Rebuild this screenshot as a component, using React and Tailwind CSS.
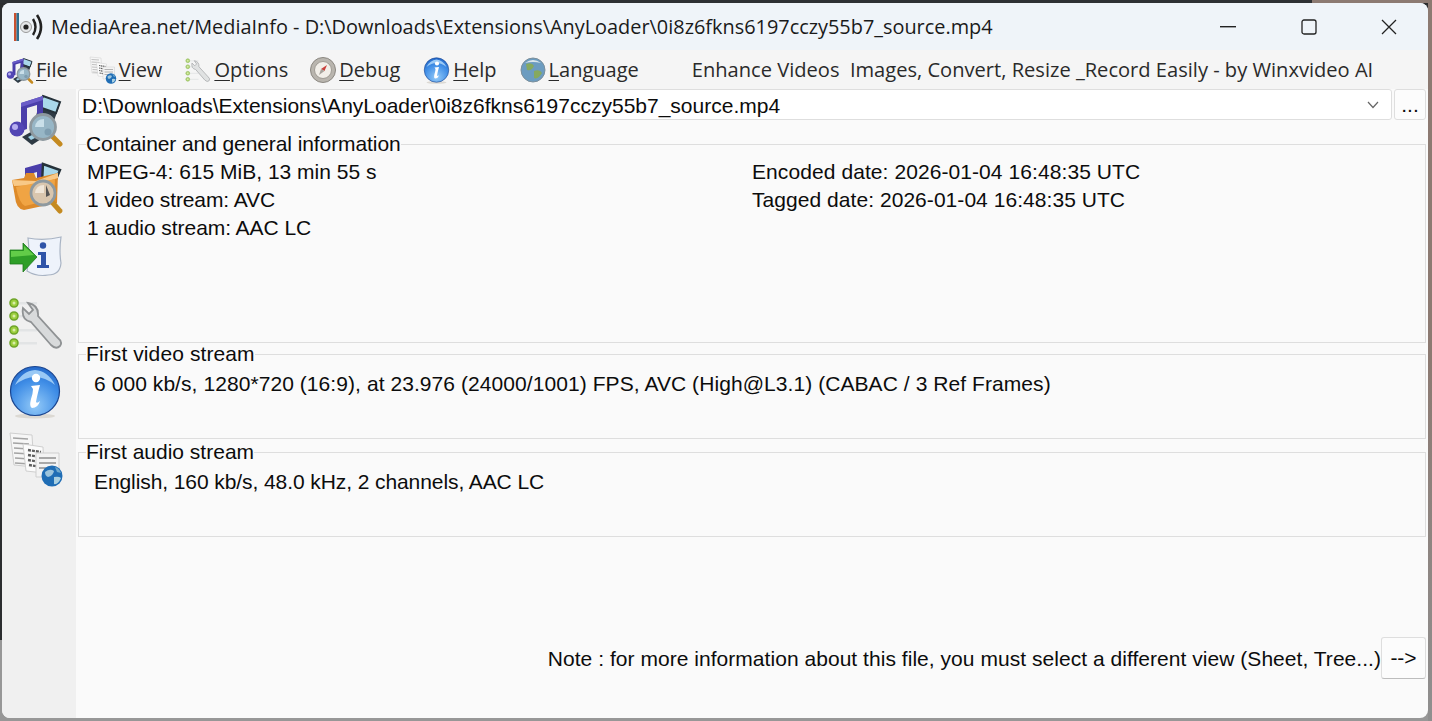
import React from 'react';

const BODY = { fontFamily: '"Liberation Sans", Arial, sans-serif' };

const AudioIcon = ({ size = 56 }) => (
  <svg width={size} height={size} viewBox="0 0 56 56">
    <path d="M32 8 L52 13 L43 38 L27 30 Z" fill="#2e3a44" />
    <path d="M35 5 L52 11 L48 22 L31 16 Z" fill="#a9d8ea" stroke="#26323a" strokeWidth="2" />
    <path d="M13 12 L35 5 L35 28 L29 30 L29 14 L19 17 L19 38 L13 40 Z" fill="#4a3eaa" />
    <path d="M13 12 L35 5 L35 9 L13 16 Z" fill="#6a5cc8" />
    <circle cx="9" cy="38" r="7.5" fill="#5246b4" />
    <circle cx="7" cy="36" r="3" fill="#b6aef0" />
    <path d="M14 46 L28 38 L36 46 L24 54 Z" fill="#2e3a44" />
    <path d="M20 46 L26 43 L29 46 L23 49 Z" fill="#9fd0e4" />
    <path d="M44 45 L52 53" stroke="#c48a20" strokeWidth="5" strokeLinecap="round" />
    <circle cx="35" cy="36" r="12.5" fill="#97b6c6" stroke="#8e999f" strokeWidth="2.8" />
    <path d="M27 36 Q28 28 36 28 L36 36 Z" fill="#c9dfe9" />
    <circle cx="40" cy="41" r="3.5" fill="#7e9db0" />
  </svg>
);

const FolderIcon = () => (
  <svg width="56" height="56" viewBox="0 0 56 56">
    <path d="M17 9 L35 4 L35 24 L29 24 L29 13 L22 15 L22 24 L17 24 Z" fill="#4a3eaa" />
    <path d="M35 5 L52 11 L44 30 L34 24 Z" fill="#a9d8ea" stroke="#26323a" strokeWidth="2.4" />
    <path d="M4 21 L16 19 L18 14 L26 14 L28 19 L50 14 L49 44 L16 51 Q8 50 7 38 Z" fill="#dd8a2a" />
    <path d="M4 21 L28 22 L50 14 L50 19 L28 26 L6 27 Z" fill="#f8c988" />
    <path d="M8 28 L47 20 L46 40 L17 47 Q11 44 8 28 Z" fill="#f0a444" />
    <path d="M44 43 L52 52" stroke="#c48a20" strokeWidth="5" strokeLinecap="round" />
    <circle cx="35" cy="34" r="12" fill="#d9c6ae" stroke="#8e999f" strokeWidth="2.8" />
    <path d="M27 34 Q28 26 36 26 L36 34 Z" fill="#f0e6d8" />
    <path d="M38 26 L42 36 L38 38 Z" fill="#555" />
  </svg>
);

const TextIcon = () => (
  <svg width="56" height="56" viewBox="0 0 56 56">
    <path d="M20 11 Q36 14 53 10 Q51 24 53 36 Q52 48 40 48 Q29 50 19 44 Q22 28 20 11 Z" fill="#eef3fb" stroke="#a9b4c4" strokeWidth="1.2" />
    <circle cx="35" cy="18.5" r="3.2" fill="#2f54a8" />
    <path d="M30 25 L38 25 L38 38 L41 38 L41 41 L29 41 L29 38 L33 38 L33 28 L30 28 Z" fill="#2f54a8" />
    <path d="M2 23 L15 23 L15 16 L29 30 L15 45 L15 37 L2 37 Z" fill="#2f9f28" stroke="#1d7a1b" strokeWidth="0.8" />
    <path d="M3 24 L16 24 L16 19 L26 28 L3 30 Z" fill="#62cc48" />
  </svg>
);

const OptionsIcon = ({ size = 56 }) => (
  <svg width={size} height={size} viewBox="0 0 56 56">
    {[8, 21, 35, 48].map((y) => (
      <g key={y}>
        <rect x="11" y={y - 1} width="18" height="2.5" fill="#e2e4e5" />
        <circle cx="6" cy={y} r="4" fill="#9ccf3e" stroke="#6fa52a" strokeWidth="1.6" />
        <circle cx="6" cy={y} r="1.5" fill="#d9eda8" />
      </g>
    ))}
    <path d="M15 13 Q13 25 23 27 L43 50 Q48 55 52 51 Q55 47 50 43 L30 21 Q31 10 20 8 L25 15 L21 19 Z" fill="#d8dadb" stroke="#8f9294" strokeWidth="1.8" />
  </svg>
);

const InfoIcon = ({ size = 56 }) => (
  <svg width={size} height={size} viewBox="0 0 56 56">
    <defs>
      <radialGradient id="infoBlue" cx="0.5" cy="0.8" r="0.85">
        <stop offset="0" stopColor="#93caf8" />
        <stop offset="0.6" stopColor="#3f8de6" />
        <stop offset="1" stopColor="#1f62c4" />
      </radialGradient>
    </defs>
    <ellipse cx="27" cy="53" rx="20" ry="2.5" fill="#dcd9d3" />
    <circle cx="27" cy="28" r="24.5" fill="url(#infoBlue)" stroke="#1a4590" strokeWidth="1.2" />
    <path d="M7 22 Q27 6 47 22 Q40 8 27 7 Q14 8 7 22 Z" fill="#9ac9f5" />
    <circle cx="28" cy="15" r="4.2" fill="#fff" />
    <path d="M23 23 L32 22 Q29 33 28 39 Q29 41 32 38 Q30 45 24 45 Q21 44 23 36 Q25 30 25 26 Z" fill="#fff" />
  </svg>
);

const SheetIcon = ({ size = 56 }) => (
  <svg width={size} height={size} viewBox="0 0 56 56">
    <path d="M2 2 L24 4 L26 36 L6 34 Z" fill="#f6f6f6" stroke="#cfcfcf" />
    <path d="M5 7 L20 8 M5 12 L21 13 M6 17 L21 18 M6 22 L22 23 M7 27 L22 28 M7 32 L22 33" stroke="#a3a3a3" strokeWidth="1.3" />
    <path d="M15 13 L35 16 L36 42 L18 40 Z" fill="#fbfbfb" stroke="#cfcfcf" />
    <path d="M20 19 L33 21 M20 24 L33 26 M20 29 L33 31 M21 34 L33 36" stroke="#5f5f5f" strokeWidth="2.4" strokeDasharray="3 1" />
    <path d="M28 22 L51 22 L51 46 L28 46 Z" fill="#f3f3f3" stroke="#cfcfcf" />
    <path d="M31 27 L48 27 M31 32 L48 32 M31 37 L40 37" stroke="#909090" strokeWidth="1.3" />
    <circle cx="44" cy="45" r="10.5" fill="#1f6db5" />
    <path d="M37 41 Q42 37 46 40 Q45 45 40 46 Q37 45 37 41 Z" fill="#9cc4dc" />
    <path d="M46 46 Q51 45 53 47 Q50 54 46 53 Z" fill="#a9cfe0" />
    <path d="M47 36 Q51 37 53 42 L49 41 Z" fill="#6fa8cc" />
  </svg>
);

const CompassIcon = () => (
  <svg width="28" height="28" viewBox="0 0 28 28">
    <circle cx="14" cy="14" r="12.5" fill="#b9b5ae" stroke="#8b8780" />
    <circle cx="14" cy="14" r="8.5" fill="#f2efe9" stroke="#a09c95" />
    <path d="M18 9 L15.5 15 L12 13 Z" fill="#c9413c" />
    <path d="M10 19 L12 13 L15.5 15 Z" fill="#a8a49d" />
  </svg>
);

const GlobeIcon = () => (
  <svg width="26" height="26" viewBox="0 0 26 26">
    <circle cx="13" cy="13" r="12" fill="#6c9cc0" stroke="#7c8f9a" />
    <path d="M6 7 Q12 5 14 9 Q12 14 7 13 Z M14 14 Q20 12 22 16 Q18 23 14 21 Z" fill="#86a95f" />
    <path d="M5 6 Q13 0 21 6 Q13 4 5 6 Z" fill="#dbe6ec" />
  </svg>
);

const MenuItem = ({ icon, letter, rest, className = '' }) => (
  <div className={`flex items-center ${className}`}>
    <div className="flex w-7 items-center justify-center">{icon}</div>
    <span className="ml-[2px] whitespace-nowrap">
      <span className="underline decoration-1 underline-offset-[3px]">{letter}</span>
      {rest}
    </span>
  </div>
);

const GroupBox = ({ title, titleClass = '', className = '', children }) => (
  <fieldset className={`mx-0 min-w-0 border border-[#dedede] px-[8px] pb-0 ${className}`}>
    <legend className="-ml-[1px] px-0 text-[21px] leading-[21px] text-[#0c0c0c]">
      <span className={`block -translate-y-[1px] ${titleClass}`}>{title}</span>
    </legend>
    {children}
  </fieldset>
);

export default function App() {
  return (
    <div
      className="h-[721px] w-[1432px] overflow-hidden pl-[2px] pr-[4px] pt-[3px] pb-[3px] [background:linear-gradient(90deg,#2e3134_1312px,#8c7a72_1312px)_top/100%_3px_no-repeat,linear-gradient(180deg,#8c7a72_50%,#8f8f8f_100%)_right/4px_100%_no-repeat,linear-gradient(180deg,#2b2d2f_640px,#979797_640px)]"
      style={BODY}
    >
      <div className="flex h-full flex-col overflow-hidden rounded-[8px] bg-[#fafafa] text-[#0c0c0c]">
        {/* title bar */}
        <div className="flex h-[47px] shrink-0 items-center bg-[#eff4f9]">
          <svg width="32" height="32" viewBox="0 0 32 32" className="ml-[10px]">
            <rect x="2" y="2" width="2.5" height="28" fill="#c9502e" />
            <rect x="4.5" y="2" width="2.5" height="28" fill="#2e6e8e" />
            <circle cx="14" cy="16" r="5.5" fill="#e4e6e8" stroke="#9a9a9a" />
            <circle cx="14" cy="16" r="2.6" fill="#222" />
            <path d="M21 8 Q26 16 21 24" fill="none" stroke="#222" strokeWidth="2.4" />
            <path d="M25 4 Q33 16 25 28" fill="none" stroke="#222" strokeWidth="2.6" />
          </svg>
          <span className="ml-[7px] whitespace-nowrap font-['Open_Sans'] text-[19.9px] text-[#1a1a1a]">
            MediaArea.net/MediaInfo - D:\Downloads\Extensions\AnyLoader\0i8z6fkns6197cczy55b7_source.mp4
          </span>
          <div className="ml-auto flex items-center pr-[3px]">
            <svg width="16" height="2" viewBox="0 0 16 2" className="mr-[65px]"><rect width="16" height="1.4" fill="#222" /></svg>
            <svg width="16" height="16" viewBox="0 0 16 16" className="mr-[64px]"><rect x="1" y="1" width="14" height="14" rx="2" fill="none" stroke="#222" strokeWidth="1.3" /></svg>
            <svg width="16" height="16" viewBox="0 0 16 16" className="mr-[28px]"><path d="M1 1 L15 15 M15 1 L1 15" stroke="#222" strokeWidth="1.3" /></svg>
          </div>
        </div>

        {/* menu bar */}
        <div className="flex h-[39px] shrink-0 items-center bg-[#f5f5f5] pl-[4px] font-['Open_Sans'] text-[20px] text-[#2a2a2a]">
          <MenuItem icon={<AudioIcon size={30} />} letter="F" rest="ile" />
          <MenuItem icon={<SheetIcon size={28} />} letter="V" rest="iew" className="ml-[21px]" />
          <MenuItem icon={<div className="opacity-70"><OptionsIcon size={26} /></div>} letter="O" rest="ptions" className="ml-[22px]" />
          <MenuItem icon={<CompassIcon />} letter="D" rest="ebug" className="ml-[21px]" />
          <MenuItem icon={<InfoIcon size={28} />} letter="H" rest="elp" className="ml-[23px]" />
          <MenuItem icon={<GlobeIcon />} letter="L" rest="anguage" className="ml-[22px]" />
          <span className="ml-[53px] translate-y-[1px] whitespace-nowrap text-[20.1px]">Enhance Videos&nbsp; Images, Convert, Resize _Record Easily - by Winxvideo AI</span>
        </div>

        <div className="flex min-h-0 flex-1">
          {/* left toolbar */}
          <div className="flex w-[74px] shrink-0 flex-col items-center gap-[12px] bg-[#f0f0f0] pt-[2px] pr-[6px]">
            <AudioIcon />
            <FolderIcon />
            <TextIcon />
            <OptionsIcon />
            <InfoIcon />
            <SheetIcon />
          </div>

          {/* main panel */}
          <div className="flex min-w-0 flex-1 flex-col pl-[2px] pr-[2px]">
            <div className="flex h-[31px] shrink-0 gap-[2px]">
              <div className="flex h-[31px] flex-1 items-center justify-between rounded-[3px] border border-[#dedede] bg-white pl-[3px] pr-[12px] text-[21px] leading-none">
                <span className="translate-y-[1px] whitespace-nowrap">D:\Downloads\Extensions\AnyLoader\0i8z6fkns6197cczy55b7_source.mp4</span>
                <svg width="12" height="8" viewBox="0 0 12 8"><path d="M1 1 L6 6.5 L11 1" fill="none" stroke="#666" strokeWidth="1.2" /></svg>
              </div>
              <button className="h-[31px] w-[32px] rounded-[3px] border border-[#dedede] bg-[#fcfcfc] text-[21px] leading-none">...</button>
            </div>

            <GroupBox title="Container and general information" titleClass="tracking-[-0.09px]" className="mt-[14px] h-[209px]">
              <div className="grid grid-cols-[665px_1fr] pt-[3px] text-[21px] leading-[28px]">
                <div>MPEG-4: 615 MiB, 13 min 55 s</div>
                <div className="tracking-[0.08px]">Encoded date: 2026-01-04 16:48:35 UTC</div>
                <div className="tracking-[-0.1px]">1 video stream: AVC</div>
                <div className="tracking-[0.05px]">Tagged date: 2026-01-04 16:48:35 UTC</div>
                <div className="tracking-[-0.05px]">1 audio stream: AAC LC</div>
              </div>
            </GroupBox>

            <GroupBox title="First video stream" titleClass="tracking-[0.1px]" className="mt-[1px] h-[95px]">
              <div className="pl-[7px] pt-[5px] text-[21px] leading-[28px] tracking-[0.07px]">6 000 kb/s, 1280*720 (16:9), at 23.976 (24000/1001) FPS, AVC (High@L3.1) (CABAC / 3 Ref Frames)</div>
            </GroupBox>

            <GroupBox title="First audio stream" className="mt-[3px] h-[95px]">
              <div className="pl-[7px] pt-[5px] text-[21px] leading-[28px] tracking-[-0.085px]">English, 160 kb/s, 48.0 kHz, 2 channels, AAC LC</div>
            </GroupBox>

            <div className="mt-auto mb-[39px] flex items-center justify-end">
              <span className="translate-y-[1px] whitespace-nowrap text-[21px] tracking-[0.04px]">Note : for more information about this file, you must select a different view (Sheet, Tree...)</span>
              <button className="h-[42px] w-[45px] rounded-[3px] border border-[#dedede] border-b-[#bdbdbd] bg-[#fcfcfc] text-[21px]">--&gt;</button>
            </div>
          </div>
        </div>
      </div>
    </div>
  );
}
